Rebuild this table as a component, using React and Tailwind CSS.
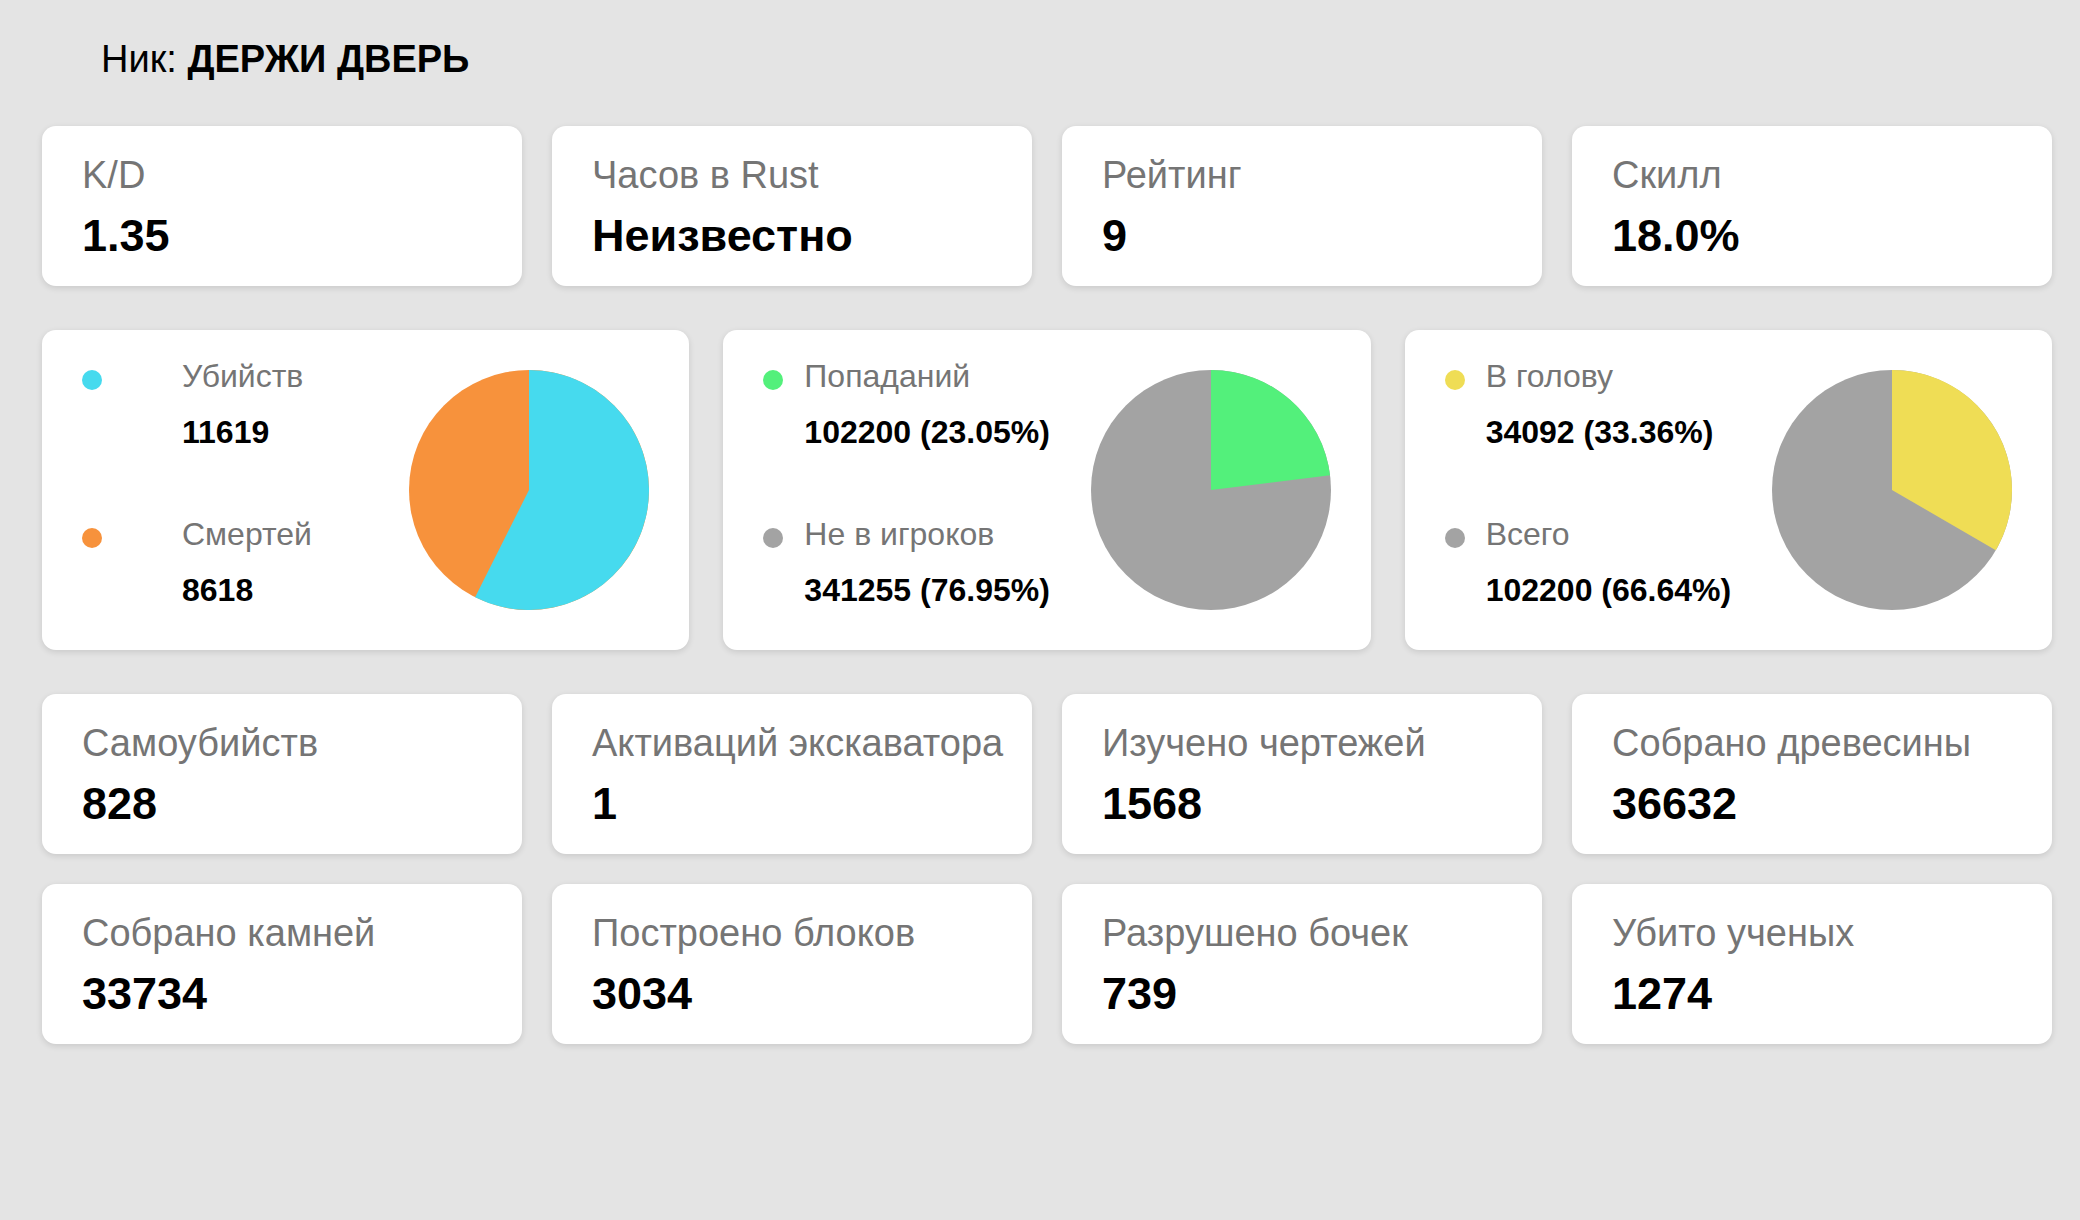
import React from "react";

const stats1 = [
  { label: "K/D", value: "1.35" },
  { label: "Часов в Rust", value: "Неизвестно" },
  { label: "Рейтинг", value: "9" },
  { label: "Скилл", value: "18.0%" },
];

const stats2 = [
  { label: "Самоубийств", value: "828" },
  { label: "Активаций экскаватора", value: "1" },
  { label: "Изучено чертежей", value: "1568" },
  { label: "Собрано древесины", value: "36632" },
  { label: "Собрано камней", value: "33734" },
  { label: "Построено блоков", value: "3034" },
  { label: "Разрушено бочек", value: "739" },
  { label: "Убито ученых", value: "1274" },
];

function StatCard({ label, value }) {
  return (
    <div className="h-[160px] rounded-[14px] bg-white px-[40px] pt-[27px] shadow-[0_2px_6px_rgba(0,0,0,0.12)]">
      <div className="whitespace-nowrap text-[38px] leading-[44px] text-[#757575]">{label}</div>
      <div className="mt-[11px] text-[45px] font-bold leading-[56px] text-black">{value}</div>
    </div>
  );
}

function Pie({ fraction, color, rest }) {
  const r = 120;
  const t = 2 * Math.PI * fraction;
  const x = r + r * Math.sin(t);
  const y = r - r * Math.cos(t);
  const large = fraction > 0.5 ? 1 : 0;
  const d = `M${r},${r} L${r},0 A${r},${r} 0 ${large} 1 ${x.toFixed(2)},${y.toFixed(2)} Z`;
  return (
    <svg width="240" height="240" viewBox="0 0 240 240" className="shrink-0">
      <circle cx="120" cy="120" r="120" fill={rest} />
      <path d={d} fill={color} />
    </svg>
  );
}

function PieCard({ items, fraction, textGap }) {
  return (
    <div className="flex h-[320px] items-center justify-between rounded-[14px] bg-white pl-[40px] pr-[40px] shadow-[0_2px_6px_rgba(0,0,0,0.12)]">
      <div className="self-start pt-[28px]">
        {items.map((it, i) => (
          <div key={i} className={"flex items-start " + (i === 1 ? "mt-[66px]" : "")}>
            <div className="mt-[12px] h-[20px] w-[20px] shrink-0 rounded-full" style={{ backgroundColor: it.color }} />
            <div style={{ marginLeft: textGap }}>
              <div className="whitespace-nowrap text-[32px] leading-[36px] text-[#757575]">{it.label}</div>
              <div className="mt-[20px] whitespace-nowrap text-[32px] font-bold leading-[36px] text-black">{it.value}</div>
            </div>
          </div>
        ))}
      </div>
      <Pie fraction={fraction} color={items[0].color} rest={items[1].color} />
    </div>
  );
}

export default function App() {
  return (
    <div className="min-h-screen bg-[#e4e4e4] pl-[42px] pr-[28px] font-['Liberation_Sans',Arial,sans-serif]">
      <div className="pl-[59px] pt-[37px] text-[38px] leading-[44px] text-black">
        Ник: <span className="font-bold">ДЕРЖИ ДВЕРЬ</span>
      </div>
      <div className="mt-[45px] grid grid-cols-4 gap-[30px]">
        {stats1.map((s) => (
          <StatCard key={s.label} {...s} />
        ))}
      </div>
      <div className="mt-[44px] grid grid-cols-3 gap-[34px]">
        <PieCard
          fraction={11619 / (11619 + 8618)}
          textGap={80}
          items={[
            { label: "Убийств", value: "11619", color: "#46daee" },
            { label: "Смертей", value: "8618", color: "#f7923c" },
          ]}
        />
        <PieCard
          fraction={0.2305}
          textGap={21}
          items={[
            { label: "Попаданий", value: "102200 (23.05%)", color: "#53f07b" },
            { label: "Не в игроков", value: "341255 (76.95%)", color: "#a3a3a3" },
          ]}
        />
        <PieCard
          fraction={0.3336}
          textGap={21}
          items={[
            { label: "В голову", value: "34092 (33.36%)", color: "#efdd55" },
            { label: "Всего", value: "102200 (66.64%)", color: "#a3a3a3" },
          ]}
        />
      </div>
      <div className="mt-[44px] grid grid-cols-4 gap-[30px]">
        {stats2.map((s) => (
          <StatCard key={s.label} {...s} />
        ))}
      </div>
    </div>
  );
}
